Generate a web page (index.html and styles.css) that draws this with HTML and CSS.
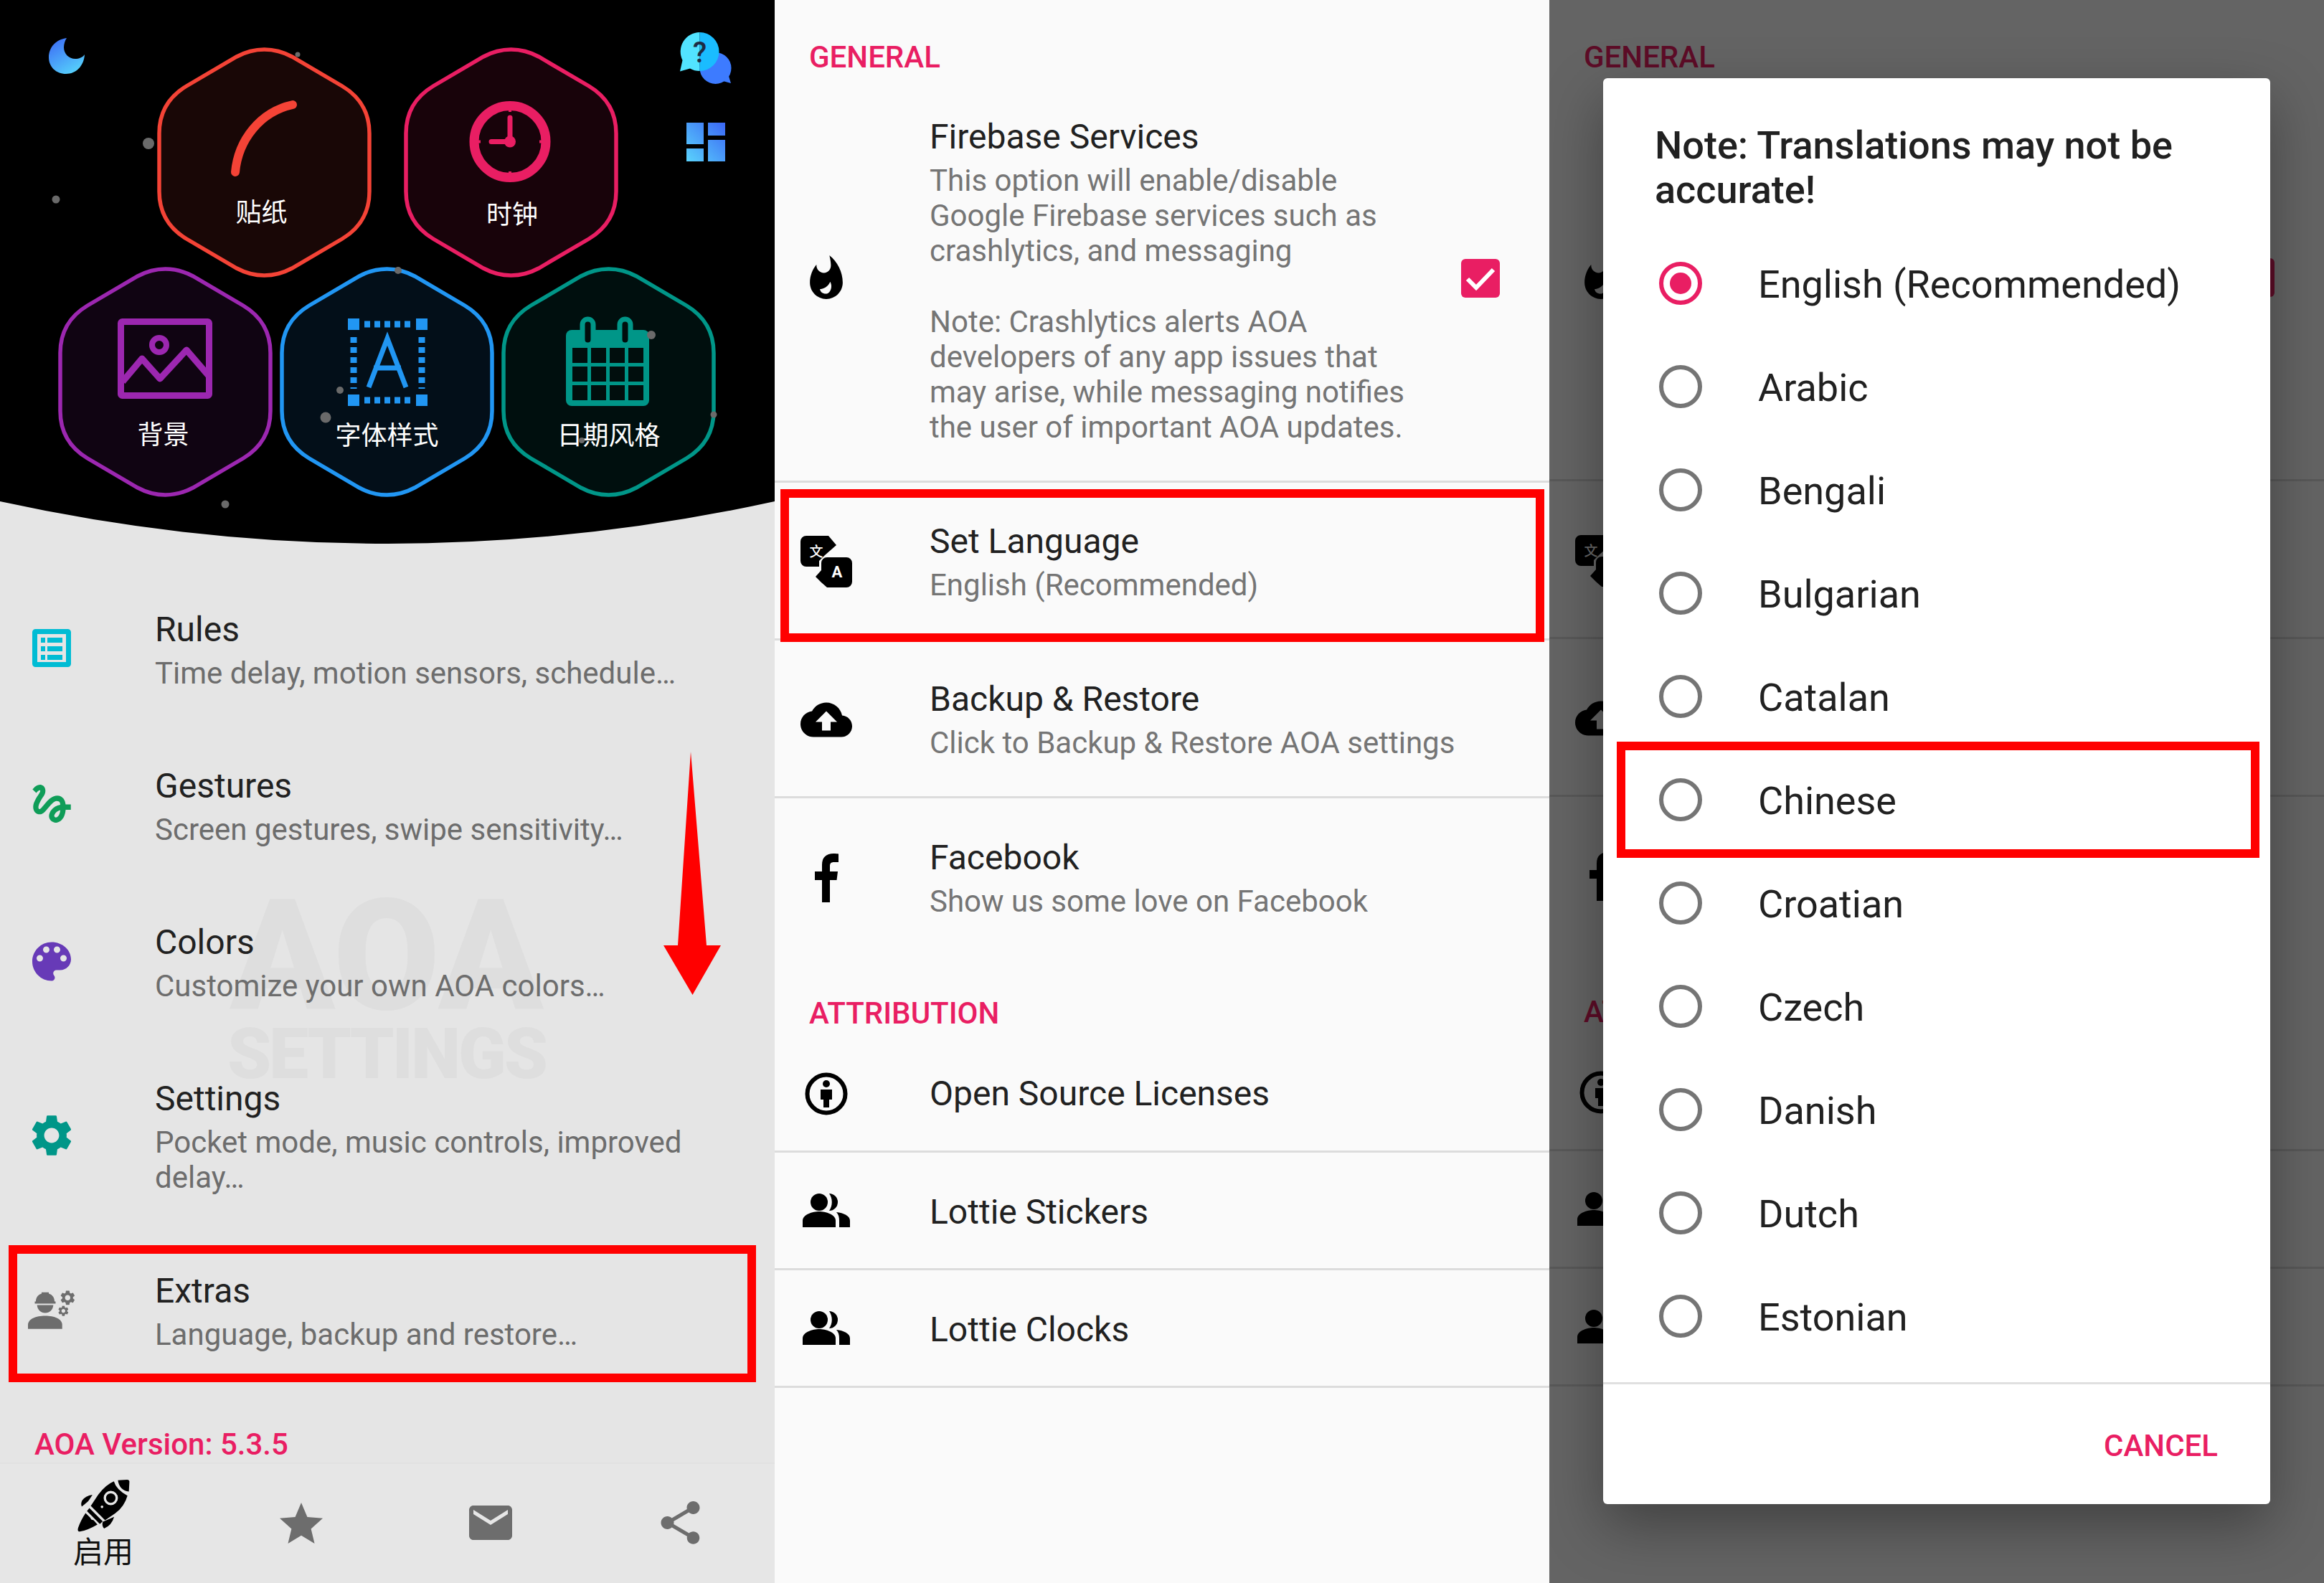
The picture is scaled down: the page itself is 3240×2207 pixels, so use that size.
FILE: index.html
```html
<!DOCTYPE html>
<html lang="en">
<head>
<meta charset="utf-8">
<title>AOA settings</title>
<link rel="stylesheet" href="styles.css">
</head>
<body>
<svg class="sprite" aria-hidden="true">
  <defs>
    <symbol id="hexagon" viewBox="0 0 299 321">
      <path d="M149.5 3C136 3 124 6 111 13L41 54C16 69 3 90 3 120V201C3 231 16 252 41 267L111 308C124 315 136 318 149.5 318C163 318 175 315 188 308L258 267C283 252 296 231 296 201V120C296 90 283 69 258 54L188 13C175 6 163 3 149.5 3Z" fill="currentColor" fill-opacity=".1" stroke="currentColor" stroke-width="5.500"/>
    </symbol>
    <symbol id="gear" viewBox="2.5 2 19 20">
      <path d="M19.14 12.94c.04-.3.06-.61.06-.94 0-.32-.02-.64-.07-.94l2.03-1.58c.18-.14.23-.41.12-.61l-1.92-3.32c-.12-.22-.37-.29-.59-.22l-2.39.96c-.5-.38-1.03-.7-1.62-.94l-.36-2.54c-.04-.24-.24-.41-.48-.41h-3.84c-.24 0-.43.17-.47.41l-.36 2.54c-.59.24-1.13.57-1.62.94l-2.39-.96c-.22-.08-.47 0-.59.22L2.74 8.87c-.12.21-.08.47.12.61l2.03 1.58c-.05.3-.09.63-.09.94s.02.64.07.94l-2.03 1.58c-.18.14-.23.41-.12.61l1.92 3.32c.12.22.37.29.59.22l2.39-.96c.5.38 1.03.7 1.62.94l.36 2.54c.05.24.24.41.48.41h3.84c.24 0 .44-.17.47-.41l.36-2.54c.59-.24 1.13-.56 1.62-.94l2.39.96c.22.08.47 0 .59-.22l1.92-3.32c.12-.22.07-.47-.12-.61l-2.01-1.58zM12 15.6c-1.98 0-3.6-1.62-3.6-3.6s1.62-3.6 3.6-3.6 3.6 1.62 3.6 3.6-1.62 3.6-3.6 3.6z"/>
    </symbol>
    <symbol id="flame" viewBox="4 .67 16 21.33">
      <path fill-rule="evenodd" d="M13.5.67s.74 2.65.74 4.8c0 2.06-1.35 3.73-3.41 3.73-2.07 0-3.63-1.67-3.63-3.73l.03-.36C5.21 7.51 4 10.62 4 14c0 4.42 3.58 8 8 8s8-3.58 8-8C20 8.61 17.41 3.8 13.5.67zM11.8 19.4c-1.6 0-2.8-1-2.9-2.3 1.4 0 4-1 5-3.6.5 1 .7 2 .5 3-.3 1.7-1.3 2.9-2.600 2.900z"/>
    </symbol>
    <symbol id="translate" viewBox="0 0 72 72">
      <path d="M8 0H39L50 13L42 20L34 27L26 35V43H8A8 8 0 0 1 0 35V8A8 8 0 0 1 8 0Z"/>
      <path d="M37 30H64A8 8 0 0 1 72 38V64A8 8 0 0 1 64 72H37L29 65L21 57L29 48V38A8 8 0 0 1 37 30Z"/>
      <text x="22" y="29" class="glyph-cjk">文</text>
      <text x="51" y="58" class="glyph-latin">A</text>
    </symbol>
    <symbol id="cloud" viewBox="0 4 24 16">
      <path d="M19.35 10.04C18.67 6.59 15.64 4 12 4 9.11 4 6.6 5.64 5.35 8.04 2.34 8.36 0 10.91 0 14c0 3.31 2.69 6 6 6h13c2.76 0 5-2.24 5-5 0-2.64-2.05-4.78-4.65-4.96zM14 13v4h-4v-4H7l5-5 5 5h-3z"/>
    </symbol>
    <symbol id="facebook" viewBox="0 0 33 68">
      <path d="M10 68V37H0V25H10V16C10 5 16 0 26 0C29 0 32 .3 33 .5V12H27C22 12 21 14 21 18V25H32L30.5 37H21V68Z"/>
    </symbol>
    <symbol id="person-info" viewBox="0 0 60 60">
      <circle cx="30" cy="30" r="26.5" fill="none" stroke="#000" stroke-width="6"/>
      <circle cx="30" cy="16" r="5"/>
      <path d="M22 24H38V38H34V49H26V38H22Z"/>
    </symbol>
    <symbol id="people" viewBox="0 0 66 47">
      <circle cx="23" cy="12" r="12"/>
      <path d="M0 47V38C0 29 14 25 23 25C32 25 46 29 46 38V47Z"/>
      <path d="M37 0A12 12 0 0 1 37 24C42 17 42 7 37 0Z"/>
      <path d="M47 26C57 27 66 31 66 38V47H51V38C51 33 50 29 47 26Z"/>
    </symbol>
    <symbol id="checkbox" viewBox="0 0 54 54">
      <rect width="54" height="54" rx="6" fill="#e91e63"/>
      <path d="M9 28L21 40L45 15" fill="none" stroke="#fff" stroke-width="6"/>
    </symbol>
    <linearGradient id="moon-fill" x1="0" y1="0" x2=".6" y2="1">
      <stop offset="0" stop-color="#3b66f5"/><stop offset="1" stop-color="#55cdfb"/>
    </linearGradient>
    <linearGradient id="tile-fill" gradientUnits="userSpaceOnUse" x1="54" y1="0" x2="0" y2="54">
      <stop offset="0" stop-color="#3b66f5"/><stop offset="1" stop-color="#5ad3fc"/>
    </linearGradient>
  </defs>
</svg>

<main class="page">

  <section class="panel panel-home">
    <div class="watermark"><div class="wm-top">AOA</div><div class="wm-bottom">SETTINGS</div></div>

    <header class="launcher">
      <svg class="launcher-bg" viewBox="0 0 1080 799" width="1080" height="799" aria-hidden="true"><path d="M0 0H1080V699Q540 817 0 699Z" fill="#000"/></svg>

      <svg class="tool tool-moon" viewBox="0 0 50 50" width="50" height="50" aria-hidden="true"><path d="M25 0C10 2 0 13 0 27C0 40 10 50 24 50C38 50 49 39 50 23C47 27 42 29 37 29C28 29 21 22 21 13C21 8 23 3 25 0Z" fill="url(#moon-fill)"/></svg>
      <svg class="tool tool-help" viewBox="0 0 72 72" width="72" height="72" aria-hidden="true">
        <circle cx="49.500" cy="50" r="22" fill="#3d7bff"/>
        <path d="M60 68L71 71L67 58Z" fill="#3d7bff"/>
        <path d="M27.500 0A27 27 0 0 0 3.500 39L0 54.500L14 50.500A27 27 0 0 0 27.500 54Z" fill="#52e3ff"/>
        <path d="M27.500 0A27 27 0 0 1 27.500 54Z" fill="#1abcff"/>
        <text x="27.500" y="42" class="help-mark">?</text>
      </svg>
      <svg class="tool tool-tiles" viewBox="0 0 54 54" width="54" height="54" aria-hidden="true">
        <path d="M0 0H24V30H0ZM30 0H54V18H30ZM0 36H24V54H0ZM30 24H54V54H30Z" fill="url(#tile-fill)"/>
      </svg>

      <div class="hex-row hex-row-top">
        <div class="hex hex-red">
          <svg class="hex-art" viewBox="0 0 299 321" width="299" height="321" aria-hidden="true">
            <use href="#hexagon" width="299" height="321"/>
            <path d="M109 174C113 130 143 90 189 80" fill="none" stroke="currentColor" stroke-width="12" stroke-linecap="round"/>
          </svg>
          <span class="hex-label label-sticker">贴纸</span>
        </div>
        <div class="hex hex-pink">
          <svg class="hex-art" viewBox="0 0 299 321" width="299" height="321" aria-hidden="true">
            <use href="#hexagon" width="299" height="321"/>
            <circle cx="148" cy="131.5" r="50" fill="none" stroke="currentColor" stroke-width="13"/>
            <path d="M148 98V131.5H122" fill="none" stroke="currentColor" stroke-width="7" stroke-linecap="round"/>
            <circle cx="148" cy="131.5" r="8" fill="currentColor"/>
            <path d="M148 85V90M148 173V178M102 131.5H107M189 131.5H194" stroke="currentColor" stroke-width="4"/>
          </svg>
          <span class="hex-label label-clock">时钟</span>
        </div>
      </div>

      <div class="hex-row hex-row-bottom">
        <div class="hex hex-purple">
          <svg class="hex-art" viewBox="0 0 299 321" width="299" height="321" aria-hidden="true">
            <use href="#hexagon" width="299" height="321"/>
            <rect x="87.500" y="76.500" width="123" height="103" rx="2" fill="none" stroke="currentColor" stroke-width="9"/>
            <circle cx="141" cy="109" r="10" fill="none" stroke="currentColor" stroke-width="8"/>
            <path d="M90 160L117 128L142 156L179 116L210 152" fill="none" stroke="currentColor" stroke-width="9" stroke-linejoin="round"/>
          </svg>
          <span class="hex-label label-wall">背景</span>
        </div>
        <div class="hex hex-blue">
          <svg class="hex-art" viewBox="0 0 299 321" width="299" height="321" aria-hidden="true">
            <use href="#hexagon" width="299" height="321"/>
            <path d="M95 72h16v16H95zM190 72h16v16h-16zM95 178h16v16H95zM190 178h16v16h-16z" fill="currentColor"/>
            <path d="M118 80H184M118 186H184M103 98V170M198 98V170" fill="none" stroke="currentColor" stroke-width="9" stroke-dasharray="8 6"/>
            <path d="M124 168L150 100L176 168M131 141H169" fill="none" stroke="currentColor" stroke-width="7"/>
          </svg>
          <span class="hex-label label-row">字体样式</span>
        </div>
        <div class="hex hex-teal">
          <svg class="hex-art" viewBox="0 0 299 321" width="299" height="321" aria-hidden="true">
            <use href="#hexagon" width="299" height="321"/>
            <rect x="90" y="88" width="116" height="106" rx="8" fill="currentColor"/>
            <path d="M99 113h21v21H99zM125 113h21v21h-21zM151 113h21v21h-21zM177 113h21v21h-21zM99 139h21v21H99zM125 139h21v21h-21zM151 139h21v21h-21zM177 139h21v21h-21zM99 165h21v21H99zM125 165h21v21h-21zM151 165h21v21h-21zM177 165h21v21h-21z" fill="#010e0d"/>
            <rect x="113" y="73" width="15" height="36" rx="7.500" fill="#010e0d" stroke="currentColor" stroke-width="7"/>
            <rect x="165" y="73" width="15" height="36" rx="7.500" fill="#010e0d" stroke="currentColor" stroke-width="7"/>
          </svg>
          <span class="hex-label label-row">日期风格</span>
        </div>
      </div>

      <svg class="particles" viewBox="0 0 1080 799" width="1080" height="799" aria-hidden="true">
        <g fill="#6a6a6a">
          <circle cx="207" cy="200" r="8"/><circle cx="415" cy="76" r="3.500"/><circle cx="78" cy="278" r="5.500"/>
          <circle cx="555" cy="377" r="5"/><circle cx="474" cy="544" r="5"/><circle cx="454" cy="582" r="7.500"/>
          <circle cx="908" cy="467" r="6"/><circle cx="995" cy="578" r="4.500"/><circle cx="314" cy="703" r="5.500"/><circle cx="811" cy="614" r="4"/>
        </g>
      </svg>
    </header>

    <ul class="menu">
      <li class="row">
        <span class="slot"><svg viewBox="0 0 54 53" width="54" height="53" aria-hidden="true"><rect x="3.500" y="3.500" width="47" height="46" rx="1" fill="none" stroke="#00bcd4" stroke-width="7"/><path d="M12 12h6v7h-6zM21 12h21v7H21zM12 24h6v7h-6zM21 24h21v7H21zM12 36h6v7h-6zM21 36h21v7H21z" fill="#00bcd4"/></svg></span>
        <div class="copy"><div class="title">Rules</div><div class="sub">Time delay, motion sensors, schedule…</div></div>
      </li>
      <li class="row">
        <span class="slot"><svg viewBox="2.800 3 18.200 18.700" width="54" height="55" aria-hidden="true"><path fill="#0f9d58" d="M4.590 6.890c.7-.71 1.400-1.350 1.710-1.220.5.2 0 1.030-.3 1.520-.25.42-2.860 3.890-2.860 6.310 0 1.280.48 2.340 1.340 2.980.75.56 1.740.73 2.640.46 1.070-.31 1.950-1.400 3.060-2.770 1.210-1.490 2.830-3.440 4.080-3.440 1.630 0 1.650 1.010 1.760 1.790-3.780.64-5.380 3.670-5.380 5.370 0 1.700 1.440 3.090 3.210 3.090 1.630 0 4.290-1.330 4.690-6.100H21v-2.500h-2.470c-.15-1.650-1.090-4.200-4.030-4.200-2.250 0-4.180 1.910-4.940 2.840-.58.73-2.060 2.480-2.290 2.720-.25.3-.68.84-1.110.84-.45 0-.72-.83-.36-1.920.35-1.090 1.400-2.860 1.850-3.520.78-1.140 1.300-1.920 1.300-3.280C8.950 3.690 7.310 3 6.440 3 5.120 3 3.970 4 3.720 4.250c-.36.36-.66.66-.88.93l1.750 1.710zm9.290 11.660c-.31 0-.74-.26-.74-.72 0-.6.73-2.200 2.870-2.760-.3 2.690-1.430 3.480-2.130 3.480z"/></svg></span>
        <div class="copy"><div class="title">Gestures</div><div class="sub">Screen gestures, swipe sensitivity…</div></div>
      </li>
      <li class="row">
        <span class="slot"><svg viewBox="3 3 18 18" width="54" height="55" aria-hidden="true"><path fill="#673ab7" d="M12 3c-4.970 0-9 4.030-9 9s4.030 9 9 9c.83 0 1.500-.67 1.500-1.500 0-.39-.15-.74-.39-1.010-.23-.26-.38-.61-.38-.99 0-.83.67-1.500 1.500-1.500H16c2.760 0 5-2.240 5-5 0-4.420-4.030-8-9-8zm-5.500 9c-.83 0-1.500-.67-1.500-1.500S5.670 9 6.500 9 8 9.670 8 10.500 7.330 12 6.500 12zm3-4C8.670 8 8 7.330 8 6.500S8.670 5 9.500 5s1.500.67 1.500 1.500S10.330 8 9.500 8zm5 0c-.83 0-1.500-.67-1.500-1.500S13.670 5 14.500 5s1.500.67 1.500 1.500S15.330 8 14.500 8zm3 4c-.83 0-1.500-.67-1.500-1.500S16.670 9 17.500 9s1.500.67 1.500 1.500-.67 1.500-1.500 1.500z"/></svg></span>
        <div class="copy"><div class="title">Colors</div><div class="sub">Customize your own AOA colors…</div></div>
      </li>
      <li class="row">
        <span class="slot"><svg width="56" height="58" fill="#009688" aria-hidden="true"><use href="#gear" width="56" height="58"/></svg></span>
        <div class="copy"><div class="title">Settings</div><div class="sub">Pocket mode, music controls, improved<br>delay…</div></div>
      </li>
      <li class="row">
        <span class="slot"><svg viewBox="0 0 66 54" width="66" height="54" fill="#6d6d6d" aria-hidden="true">
          <path d="M9.500 18.500V15.500H11C11 10 14 6 19 4.500V2.700H29V4.500C34 6 37 10 37 15.500H38.500V18.500Z"/>
          <path d="M12.700 20.500H35.300C35 27 30 31.500 24 31.500C18 31.500 13 27 12.700 20.500Z"/>
          <path d="M0 53.700V48C0 40 11 35.500 24 35.500C37 35.500 47.700 40 47.700 48V53.700Z"/>
          <use href="#gear" x="45" y="0" width="20.700" height="20.700"/>
          <use href="#gear" x="42" y="21.300" width="14.700" height="14.700"/>
        </svg></span>
        <div class="copy"><div class="title">Extras</div><div class="sub">Language, backup and restore…</div></div>
      </li>
    </ul>

    <p class="version">AOA Version: 5.3.5</p>

    <nav class="bottom-nav">
      <div class="nav-item nav-item-active">
        <svg viewBox="52 38 220 220" width="73" height="73" aria-hidden="true">
          <path d="M222 40L260 38Q272 38 270 50L268 88Q228 82 222 40Z"/>
          <path d="M205 45Q215 80 262 105Q250 150 210 180L168 208L108 148L140 100Q170 60 205 45Z"/>
          <circle cx="192" cy="115" r="25" fill="none" stroke="#e6e6e6" stroke-width="10"/>
          <circle cx="155" cy="152" r="5.500" fill="#e6e6e6"/>
          <path d="M102 157L158 213L146 224L92 170Z"/>
          <path d="M86 178L106 198L110 205L120 208L136 226Q95 250 62 256Q50 256 55 240Q65 210 86 178Z"/>
          <path d="M115 101Q85 105 72 125Q64 140 70 151Q95 132 100 125Z"/>
          <path d="M206 194L158 215Q154 235 164 243Q196 230 206 194Z"/>
        </svg>
        <span class="nav-label">启用</span>
      </div>
      <div class="nav-item"><svg viewBox="2 2 20 19" width="60" height="57" fill="#6d6d6d" aria-hidden="true"><path d="M12 17.270L18.180 21l-1.640-6.810L22 9.240l-7.190-.61L12 2 9.190 8.630 2 9.240l5.460 4.950L5.820 21z"/></svg></div>
      <div class="nav-item"><svg viewBox="2 4 20 16" width="60" height="48" fill="#6d6d6d" aria-hidden="true"><path d="M20 4H4c-1.100 0-1.990.9-1.990 2L2 18c0 1.100.9 2 2 2h16c1.100 0 2-.9 2-2V6c0-1.100-.9-2-2-2zm0 4l-8 5-8-5V6l8 5 8-5v2z"/></svg></div>
      <div class="nav-item"><svg viewBox="3 2 18 20" width="55" height="60" fill="#6d6d6d" aria-hidden="true"><path d="M18 16.080c-.76 0-1.440.3-1.960.77L8.910 12.700c.05-.23.09-.46.09-.7s-.04-.47-.09-.7l7.050-4.110c.54.5 1.250.81 2.040.81 1.660 0 3-1.340 3-3s-1.340-3-3-3-3 1.340-3 3c0 .24.04.47.09.7L8.040 9.810C7.500 9.310 6.790 9 6 9c-1.660 0-3 1.340-3 3s1.340 3 3 3c.79 0 1.500-.31 2.040-.81l7.120 4.160c-.05.21-.08.43-.08.65 0 1.610 1.310 2.920 2.920 2.920s2.920-1.310 2.920-2.920-1.310-2.920-2.920-2.920z"/></svg></div>
    </nav>
  </section>

  <section class="panel panel-prefs">
    <h2 class="section-head">GENERAL</h2>
    <ul class="prefs">
      <li class="row row-firebase">
        <span class="slot slot-flame"><svg width="48" height="61" aria-hidden="true"><use href="#flame" width="48" height="61"/></svg></span>
        <div class="copy"><div class="title">Firebase Services</div><div class="sub">This option will enable/disable<br>Google Firebase services such as<br>crashlytics, and messaging<br><br>Note: Crashlytics alerts AOA<br>developers of any app issues that<br>may arise, while messaging notifies<br>the user of important AOA updates.</div></div>
        <svg class="check" width="54" height="54" aria-hidden="true"><use href="#checkbox" width="54" height="54"/></svg>
      </li>
      <li class="row row-ruled">
        <span class="slot"><svg width="72" height="72" aria-hidden="true"><use href="#translate" width="72" height="72"/></svg></span>
        <div class="copy"><div class="title">Set Language</div><div class="sub">English (Recommended)</div></div>
      </li>
      <li class="row row-ruled">
        <span class="slot"><svg width="72" height="49" aria-hidden="true"><use href="#cloud" width="72" height="49"/></svg></span>
        <div class="copy"><div class="title">Backup &amp; Restore</div><div class="sub">Click to Backup &amp; Restore AOA settings</div></div>
      </li>
      <li class="row row-social">
        <span class="slot"><svg width="33" height="68" aria-hidden="true"><use href="#facebook" width="33" height="68"/></svg></span>
        <div class="copy"><div class="title">Facebook</div><div class="sub">Show us some love on Facebook</div></div>
      </li>
    </ul>
    <h2 class="section-head section-head-second">ATTRIBUTION</h2>
    <ul class="prefs">
      <li class="row row-line row-line-first">
        <span class="slot"><svg width="60" height="60" aria-hidden="true"><use href="#person-info" width="60" height="60"/></svg></span>
        <div class="copy"><div class="title">Open Source Licenses</div></div>
      </li>
      <li class="row row-line">
        <span class="slot"><svg width="66" height="47" aria-hidden="true"><use href="#people" width="66" height="47"/></svg></span>
        <div class="copy"><div class="title">Lottie Stickers</div></div>
      </li>
      <li class="row row-line">
        <span class="slot"><svg width="66" height="47" aria-hidden="true"><use href="#people" width="66" height="47"/></svg></span>
        <div class="copy"><div class="title">Lottie Clocks</div></div>
      </li>
    </ul>
  </section>

  <section class="panel panel-dialog">
    <h2 class="section-head">GENERAL</h2>
    <ul class="prefs">
      <li class="row row-firebase row-firebase-under">
        <span class="slot slot-flame"><svg width="48" height="61" aria-hidden="true"><use href="#flame" width="48" height="61"/></svg></span>
        <svg class="check" width="54" height="54" aria-hidden="true"><use href="#checkbox" width="54" height="54"/></svg>
      </li>
      <li class="row row-ruled row-two-under">
        <span class="slot"><svg width="72" height="72" aria-hidden="true"><use href="#translate" width="72" height="72"/></svg></span>
      </li>
      <li class="row row-ruled row-two-under">
        <span class="slot"><svg width="72" height="49" aria-hidden="true"><use href="#cloud" width="72" height="49"/></svg></span>
      </li>
      <li class="row row-social row-plain-under">
        <span class="slot"><svg width="33" height="68" aria-hidden="true"><use href="#facebook" width="33" height="68"/></svg></span>
      </li>
    </ul>
    <h2 class="section-head section-head-second">ATTRIBUTION</h2>
    <ul class="prefs">
      <li class="row row-line row-line-first">
        <span class="slot"><svg width="60" height="60" aria-hidden="true"><use href="#person-info" width="60" height="60"/></svg></span>
      </li>
      <li class="row row-line">
        <span class="slot"><svg width="66" height="47" aria-hidden="true"><use href="#people" width="66" height="47"/></svg></span>
      </li>
      <li class="row row-line">
        <span class="slot"><svg width="66" height="47" aria-hidden="true"><use href="#people" width="66" height="47"/></svg></span>
      </li>
    </ul>
    <div class="scrim"></div>
    <div class="dialog">
      <h3 class="dialog-title">Note: Translations may not be accurate!</h3>
      <ul class="options">
        <li class="option"><span class="radio radio-on"></span>English (Recommended)</li>
        <li class="option"><span class="radio"></span>Arabic</li>
        <li class="option"><span class="radio"></span>Bengali</li>
        <li class="option"><span class="radio"></span>Bulgarian</li>
        <li class="option"><span class="radio"></span>Catalan</li>
        <li class="option"><span class="radio"></span>Chinese</li>
        <li class="option"><span class="radio"></span>Croatian</li>
        <li class="option"><span class="radio"></span>Czech</li>
        <li class="option"><span class="radio"></span>Danish</li>
        <li class="option"><span class="radio"></span>Dutch</li>
        <li class="option"><span class="radio"></span>Estonian</li>
      </ul>
      <div class="dialog-actions"><span class="cancel">CANCEL</span></div>
    </div>
  </section>

  <div class="mark mark-extras"></div>
  <div class="mark mark-language"></div>
  <div class="mark mark-chinese"></div>
  <svg class="arrow" viewBox="0 0 80 339" width="80" height="339" aria-hidden="true"><path d="M38 0L60 270H80L40.500 339L0 270H20Z" fill="#f00"/></svg>
</main>
</body>
</html>
```

FILE: styles.css
```css
* { box-sizing: border-box; }

html, body { margin: 0; padding: 0; }

body {
  width: 3240px;
  height: 2207px;
  overflow: hidden;
  font-family: Roboto, "Liberation Sans", "Noto Sans CJK SC", sans-serif;
  color: #212121;
}

ul { list-style: none; margin: 0; padding: 0; }
h2, h3, p { margin: 0; }

.sprite { position: absolute; width: 0; height: 0; }

.page {
  position: relative;
  display: flex;
  width: 3240px;
  height: 2207px;
}

.panel {
  position: relative;
  isolation: isolate;
  width: 1080px;
  height: 2207px;
  overflow: hidden;
  display: flex;
  flex-direction: column;
}

.panel-home { background: #e5e5e5; }
.panel-prefs, .panel-dialog { background: #fafafa; }

/* launcher header */
.launcher {
  position: relative;
  height: 797px;
  padding-top: 66px;
  flex: none;
}

.launcher-bg, .particles { position: absolute; left: 0; top: 0; }
.particles { pointer-events: none; }

.tool { position: absolute; }
.tool-moon { left: 68px; top: 53px; }
.tool-help { left: 948px; top: 45px; }
.tool-tiles { left: 957px; top: 171px; }

.help-mark {
  font: 500 40px Roboto, sans-serif;
  fill: #1d2b44;
  text-anchor: middle;
}

.hex-row { position: relative; display: flex; }
.hex-row-top { padding-left: 219px; gap: 45px; }
.hex-row-bottom { padding-left: 81px; gap: 10px; margin-top: -15px; }

.hex {
  position: relative;
  width: 299px;
  height: 321px;
  display: flex;
  justify-content: center;
}

.hex-art { position: absolute; left: 0; top: 0; }

.hex-red { color: #f44336; }
.hex-pink { color: #e91e63; }
.hex-purple { color: #9c27b0; }
.hex-blue { color: #2196f3; }
.hex-teal { color: #009688; }

.hex-label {
  position: relative;
  height: 42px;
  font: 400 36px/42px "Noto Sans CJK SC", sans-serif;
  color: #fff;
}

.label-sticker { margin: 206px 8px 0 0; }
.label-clock { margin: 209px 0 0 3px; }
.label-wall { margin: 210px 6px 0 0; }
.label-row { margin-top: 211px; }

/* rows */
.row {
  display: flex;
  align-items: center;
  padding: 52.5px 0;
}

.slot {
  flex: none;
  width: 144px;
  display: flex;
  justify-content: center;
}

.slot svg { display: block; }

.copy { margin-left: 72px; }

.title {
  font-size: 48px;
  line-height: 56px;
  color: #212121;
}

.sub {
  margin-top: 8px;
  font-size: 42px;
  line-height: 49.2px;
  color: #757575;
}

.panel-home .sub { color: #6d6d6d; }
.panel-home .slot { margin-top: -5px; }

.menu { position: relative; }

.watermark {
  position: absolute;
  z-index: -1;
  left: 317px;
  top: 1226px;
  width: 444px;
  font-family: Roboto, sans-serif;
  font-weight: 900;
  color: #dedede;
}

.wm-top { font-size: 215px; line-height: 215px; text-align: center; }
.wm-bottom { font-size: 98px; line-height: 90px; margin-top: -16px; letter-spacing: -3px; white-space: nowrap; }

.version {
  margin: 52px 0 0 48px;
  font-size: 42px;
  line-height: 50px;
  font-weight: 500;
  color: #e91e63;
}

.bottom-nav {
  margin-top: auto;
  height: 168px;
  display: flex;
  background: #e6e6e6;
  border-top: 2px solid #e1e1e1;
}

.nav-item {
  flex: 0 0 264px;
  display: flex;
  align-items: center;
  justify-content: center;
  padding-bottom: 2px;
}

.nav-item-active {
  flex-basis: 288px;
  flex-direction: column;
  justify-content: flex-start;
  padding: 22px 0 0;
}

.nav-label {
  margin-top: 1px;
  font: 400 42px/48px "Noto Sans CJK SC", sans-serif;
  color: #111;
}

/* prefs */
.section-head {
  height: 110px;
  padding: 55px 0 0 48px;
  font-size: 42px;
  line-height: 50px;
  font-weight: 500;
  color: #e91e63;
  white-space: nowrap;
}

.section-head-second {
  height: 117px;
  padding-top: 57px;
}

.row-ruled, .row-firebase, .row-line { border-bottom: 3px solid #dcdcdc; }

.row-firebase { padding: 53px 0 49px; }
.row-ruled { padding: 54px 0 50px; }
.row-social { padding: 54.5px 0 50.5px; }

.slot-flame { margin-top: -10px; }

.check { margin: -8px 69px 0 auto; flex: none; }

.row-line { height: 164px; padding: 0; }
.row-line-first { height: 159px; }
.row-line .copy { margin-top: 5px; }
.row-line-first .copy { margin-top: -2px; }
.row-line-first .slot { margin-top: -3px; }

.row-firebase-under { height: 561px; }
.row-two-under { height: 220px; }
.row-plain-under { height: 218px; }

/* dialog */
.scrim {
  position: absolute;
  inset: 0;
  background: rgba(0, 0, 0, .6);
}

.dialog {
  position: absolute;
  left: 75px;
  top: 109px;
  width: 930px;
  height: 1988px;
  display: flex;
  flex-direction: column;
  background: #fff;
  border-radius: 6px;
  box-shadow: 0 30px 80px rgba(0, 0, 0, .35);
}

.dialog-title {
  padding: 63px 72px 0;
  font-size: 54px;
  line-height: 62px;
  font-weight: 500;
  color: #212121;
}

.options { margin-top: 27px; }

.option {
  display: flex;
  align-items: center;
  height: 144px;
  padding: 3px 0 0 78px;
  font-size: 54px;
  color: #212121;
}

.radio {
  flex: none;
  display: flex;
  align-items: center;
  justify-content: center;
  width: 60px;
  height: 60px;
  margin: -3px 78px 0 0;
  border: 6px solid #757575;
  border-radius: 50%;
}

.radio-on { border-color: #e91e63; }

.radio-on::after {
  content: "";
  width: 30px;
  height: 30px;
  border-radius: 50%;
  background: #e91e63;
}

.dialog-actions {
  margin-top: 20px;
  flex: 1;
  display: flex;
  align-items: center;
  justify-content: flex-end;
  padding: 4px 73px 0 0;
  border-top: 3px solid #e0e0e0;
}

.cancel {
  font-size: 42px;
  font-weight: 500;
  color: #e91e63;
}

/* red annotations laid over the screenshots */
.mark {
  position: absolute;
  border: 12px solid #f00;
}

.mark-extras { left: 12px; top: 1736px; width: 1042px; height: 191px; }
.mark-language { left: 1088px; top: 682px; width: 1065px; height: 213px; }
.mark-chinese { left: 2254px; top: 1034px; width: 896px; height: 162px; }

.arrow { position: absolute; left: 925px; top: 1048px; }

.glyph-cjk, .glyph-latin {
  fill: #fff;
  text-anchor: middle;
}

.glyph-cjk { font: 500 19px "Noto Sans CJK SC", sans-serif; }
.glyph-latin { font: 700 22px Roboto, sans-serif; }
```
